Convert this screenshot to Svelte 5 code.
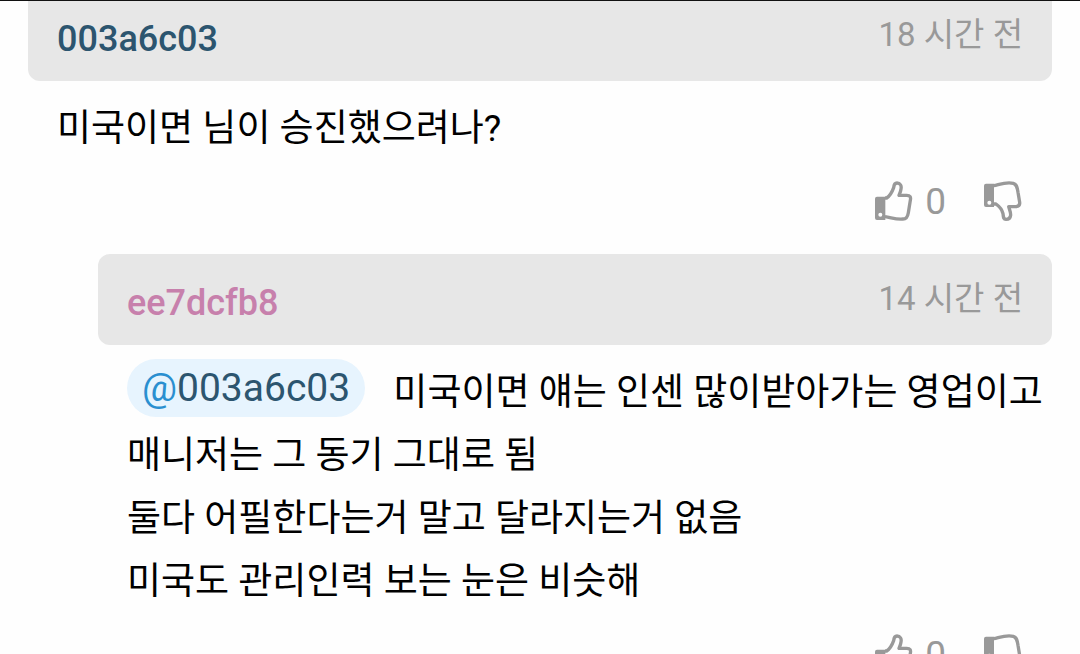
<script lang="ts">
	type Comment = {
		id: number
		author: string
		color: string
		time: string
		mention?: string
		lines: string[]
		likes: number
		reply: boolean
	}

	const comments: Comment[] = [
		{
			id: 1,
			author: '003a6c03',
			color: 'navy',
			time: '18 시간 전',
			lines: ['미국이면 님이 승진했으려나?'],
			likes: 0,
			reply: false
		},
		{
			id: 2,
			author: 'ee7dcfb8',
			color: 'pink',
			time: '14 시간 전',
			mention: '003a6c03',
			lines: [
				'미국이면 얘는 인센 많이받아가는 영업이고 매니저는 그 동기 그대로 됨',
				'둘다 어필한다는거 말고 달라지는거 없음',
				'미국도 관리인력 보는 눈은 비슷해'
			],
			likes: 0,
			reply: true
		}
	]
</script>

<main>
	{#each comments as comment (comment.id)}
		<article class:reply={comment.reply}>
			<header>
				<a class="author {comment.color}" href="#{comment.author}">{comment.author}</a>
				<time>{comment.time}</time>
			</header>
			<div class="body">
				{#each comment.lines as line, i}
					<p>
						{#if i === 0 && comment.mention}
							<a class="mention" href="#{comment.mention}"><span>@</span>{comment.mention}</a>
						{/if}
						{line}
					</p>
				{/each}
			</div>
			<footer>
				<button type="button" class="up" aria-label="좋아요">
					<svg viewBox="0 0 114 120">
						<path class="cuff" fill-rule="evenodd" d="M6 47H31V117H6Q0 117 0 111V53Q0 47 6 47ZM16 95A6 6 0 1 0 16 107A6 6 0 1 0 16 95Z" />
						<path class="hand" d="M30 51H35C45 45 52 31 56 20C57 9 60 6 66 6C76 6 80 14 78 24C77 32 74 38 72 43H95C106 43 108 49 106 58L100 95C98 108 94 114 84 114C62 116 48 109 30 107" />
					</svg>
					<span>{comment.likes}</span>
				</button>
				<button type="button" aria-label="싫어요">
					<svg viewBox="0 0 114 120">
						<path class="cuff" fill-rule="evenodd" d="M6 8H30V78H6Q0 78 0 72V14Q0 8 6 8ZM16 59A6 6 0 1 0 16 71A6 6 0 1 0 16 59Z" />
						<path class="hand" d="M29 14C48 10 66 2 88 7C98 10 100 20 102 34L107 64C108 72 104 76 96 77H74C76 85 80 92 80 102C79 112 72 115 66 115C58 115 58 108 57 98C54 84 46 76 36 69H29" />
					</svg>
				</button>
			</footer>
		</article>
	{/each}
</main>

<style>
	:global(body) {
		background: #fefefe;
	}

	main {
		box-sizing: border-box;
		height: 100vh;
		overflow: hidden;
		padding: 0 28px;
		border-top: 1px solid #111;
		font-family: Roboto, 'Noto Sans CJK KR', sans-serif;
		font-size: 37px;
		color: #000;
	}

	article:first-child {
		margin-top: -11px;
	}

	.reply {
		margin-left: 70px;
	}

	header {
		display: flex;
		justify-content: space-between;
		box-sizing: border-box;
		height: 91px;
		padding: 16px 29px 0;
		border-radius: 12px;
		background: #e7e7e7;
	}

	a {
		text-decoration: none;
	}

	.author {
		font-size: 36px;
		font-weight: 500;
		line-height: 66px;
	}

	.navy {
		color: #2c556f;
	}

	.pink {
		color: #c780ac;
	}

	time {
		font-size: 33px;
		line-height: 58px;
		color: #999;
	}

	.body {
		padding: 16px 0 0 29px;
	}

	p {
		margin: 0;
		line-height: 63px;
	}

	.mention {
		margin-right: 19px;
		padding: 6px 15px;
		border-radius: 30px;
		background: #e7f4fe;
		font-size: 39px;
		line-height: 1;
		vertical-align: 4px;
		color: #2c556f;
	}

	.mention span {
		color: #2a8fd0;
	}

	footer {
		display: flex;
		justify-content: flex-end;
		gap: 38px;
		padding: 21px 30px 33px;
	}

	button {
		display: flex;
		align-items: center;
		gap: 12px;
		height: 40px;
		padding: 0;
		border: 0;
		background: none;
		font: inherit;
		color: #999;
	}

	svg {
		width: 38px;
		height: 40px;
	}

	.cuff {
		fill: #999;
	}

	.hand {
		fill: none;
		stroke: #999;
		stroke-width: 10;
		stroke-linejoin: round;
	}
</style>
